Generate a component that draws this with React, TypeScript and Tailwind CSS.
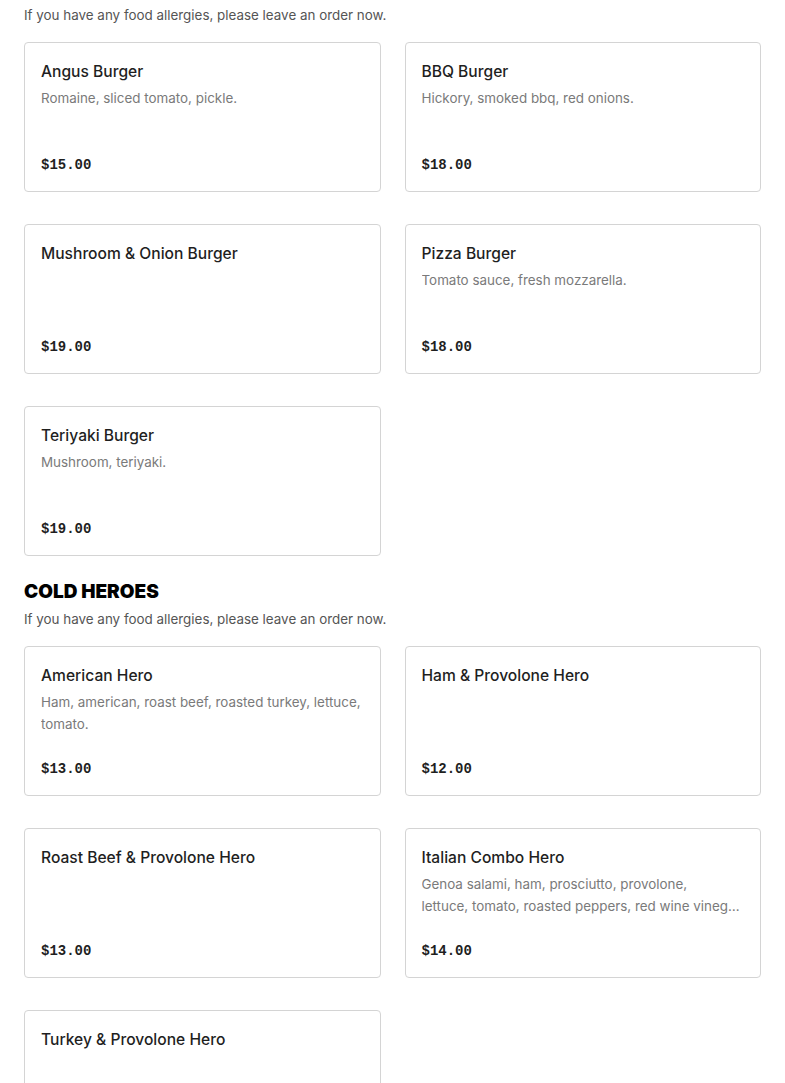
import React from "react";

type Item = { name: string; desc?: string; price: string };

const burgers: Item[] = [
  { name: "Angus Burger", desc: "Romaine, sliced tomato, pickle.", price: "$15.00" },
  { name: "BBQ Burger", desc: "Hickory, smoked bbq, red onions.", price: "$18.00" },
  { name: "Mushroom & Onion Burger", price: "$19.00" },
  { name: "Pizza Burger", desc: "Tomato sauce, fresh mozzarella.", price: "$18.00" },
  { name: "Teriyaki Burger", desc: "Mushroom, teriyaki.", price: "$19.00" },
];

const heroes: Item[] = [
  { name: "American Hero", desc: "Ham, american, roast beef, roasted turkey, lettuce, tomato.", price: "$13.00" },
  { name: "Ham & Provolone Hero", price: "$12.00" },
  { name: "Roast Beef & Provolone Hero", price: "$13.00" },
  {
    name: "Italian Combo Hero",
    desc: "Genoa salami, ham, prosciutto, provolone,\nlettuce, tomato, roasted peppers, red wine vinegar, oil.",
    price: "$14.00",
  },
  { name: "Turkey & Provolone Hero", price: "$13.00" },
];

function Card({ item }: { item: Item }) {
  return (
    <div className="flex h-[150px] flex-col rounded-[4px] border border-[#d4d4d4] bg-white px-4 pt-4 pb-4">
      <div className="pt-[1px] text-[15.6px] leading-[23px] font-medium text-[#1f1f1f]">{item.name}</div>
      {item.desc ? (
        <div className="mt-1 line-clamp-2 whitespace-pre-line text-[13.4px] leading-[22px] text-[#7a7a7a]">{item.desc}</div>
      ) : null}
      <div className="mt-auto font-['Liberation_Mono',monospace] text-[14px] leading-[20px] font-bold text-[#1f1f1f]">
        {item.price}
      </div>
    </div>
  );
}

function Grid({ items }: { items: Item[] }) {
  return (
    <div className="grid grid-cols-2 gap-x-6 gap-y-8">
      {items.map((it) => (
        <Card key={it.name} item={it} />
      ))}
    </div>
  );
}

export default function App() {
  return (
    <div className="min-h-screen bg-white px-6 pt-[4px] font-['Inter',sans-serif]">
      <p className="mb-4 text-[13.4px] leading-[22px] text-[#555]">If you have any food allergies, please leave an order now.</p>
      <Grid items={burgers} />
      <h2 className="mt-[24px] text-[19px] leading-[24px] font-black text-black">COLD HEROES</h2>
      <p className="mt-[4px] mb-4 text-[13.4px] leading-[22px] text-[#555]">
        If you have any food allergies, please leave an order now.
      </p>
      <Grid items={heroes} />
    </div>
  );
}
